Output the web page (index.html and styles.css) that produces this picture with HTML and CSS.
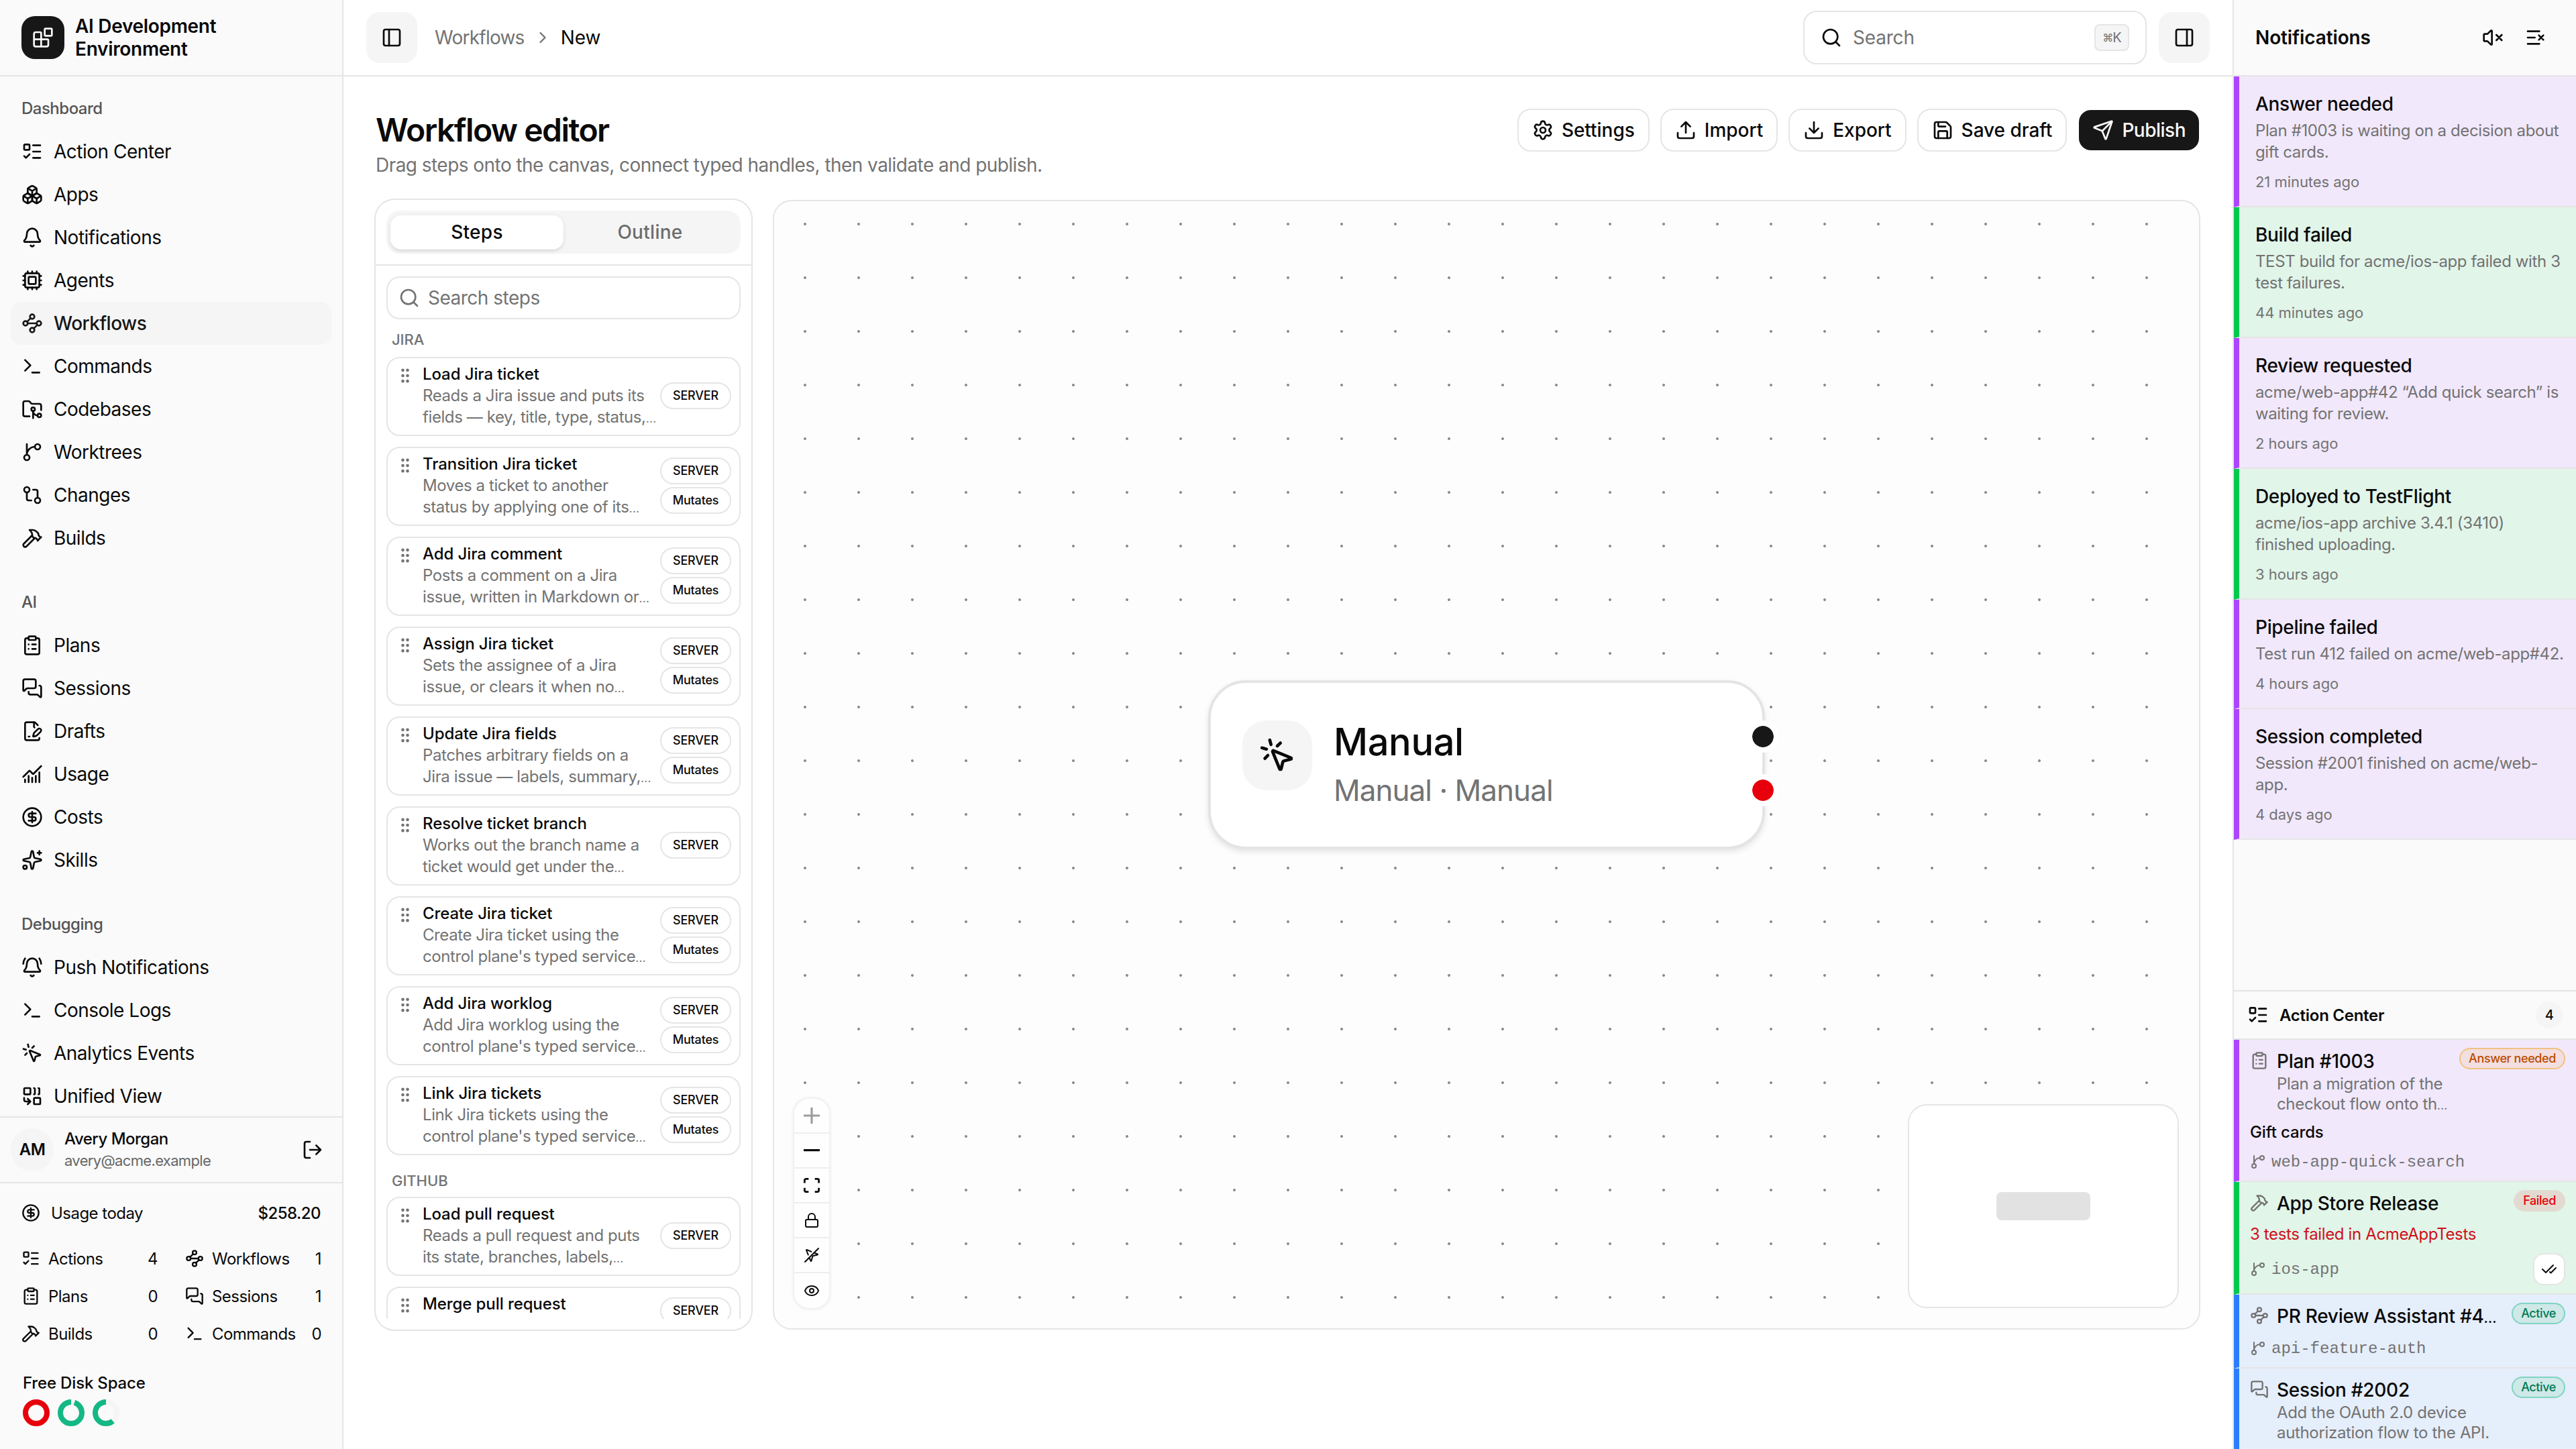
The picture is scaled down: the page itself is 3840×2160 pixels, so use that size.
FILE: index.html
```html
<!DOCTYPE html>
<html lang="en">
  <head>
    <meta charset="UTF-8" />
    <title>Workflow editor</title>
    <link rel="stylesheet" href="styles.css" />
  </head>
  <body>
    <!-- icon sprite -->
    <svg class="sprite" xmlns="http://www.w3.org/2000/svg">
      <symbol id="i-blocks" viewBox="0 0 24 24"><path d="M10 22V7a1 1 0 0 0-1-1H4a2 2 0 0 0-2 2v12a2 2 0 0 0 2 2h12a2 2 0 0 0 2-2v-5a1 1 0 0 0-1-1H2" /><rect x="14" y="2" width="8" height="8" rx="1" /></symbol>
      <symbol id="i-todo" viewBox="0 0 24 24"><path d="M13 5h8M13 12h8M13 19h8M3 17l2 2 4-4" /><rect x="3" y="4" width="6" height="6" rx="1" /></symbol>
      <symbol id="i-boxes" viewBox="0 0 24 24"><path d="M2.97 12.92A2 2 0 0 0 2 14.63v3.24a2 2 0 0 0 .97 1.71l3 1.8a2 2 0 0 0 2.06 0L12 19v-5.5l-5-3-4.03 2.42Z" /><path d="m7 16.5-4.74-2.85M7 16.5l5-3M7 16.5v5.17" /><path d="M12 13.5V19l3.97 2.38a2 2 0 0 0 2.06 0l3-1.8a2 2 0 0 0 .97-1.71v-3.24a2 2 0 0 0-.97-1.71L17 10.5l-5 3Z" /><path d="m17 16.5-5-3M17 16.5l4.74-2.85M17 16.5v5.17" /><path d="M7.97 4.42A2 2 0 0 0 7 6.13v4.37l5 3 5-3V6.13a2 2 0 0 0-.97-1.71l-3-1.8a2 2 0 0 0-2.06 0l-3 1.8Z" /><path d="M12 8 7.26 5.15M12 8l4.74-2.85M12 13.5V8" /></symbol>
      <symbol id="i-bell" viewBox="0 0 24 24"><path d="M10.268 21a2 2 0 0 0 3.464 0" /><path d="M3.262 15.326A1 1 0 0 0 4 17h16a1 1 0 0 0 .74-1.673C19.41 13.956 18 12.499 18 8A6 6 0 0 0 6 8c0 4.499-1.411 5.956-2.738 7.326" /></symbol>
      <symbol id="i-bell-ring" viewBox="0 0 24 24"><path d="M10.268 21a2 2 0 0 0 3.464 0M22 8c0-2.3-.8-4.3-2-6M4 2C2.8 3.7 2 5.7 2 8" /><path d="M3.262 15.326A1 1 0 0 0 4 17h16a1 1 0 0 0 .74-1.673C19.41 13.956 18 12.499 18 8A6 6 0 0 0 6 8c0 4.499-1.411 5.956-2.738 7.326" /></symbol>
      <symbol id="i-cpu" viewBox="0 0 24 24"><path d="M12 20v2M12 2v2M17 20v2M17 2v2M2 12h2M2 17h2M2 7h2M20 12h2M20 17h2M20 7h2M7 20v2M7 2v2" /><rect x="4" y="4" width="16" height="16" rx="2" /><rect x="8" y="8" width="8" height="8" rx="1" /></symbol>
      <symbol id="i-flow" viewBox="0 0 24 24"><circle cx="12" cy="4.5" r="2.5" /><circle cx="4.5" cy="12" r="2.5" /><circle cx="19.5" cy="12" r="2.5" /><circle cx="12" cy="19.5" r="2.5" /><path d="m10.2 6.3-3.9 3.9M7 12h10M13.8 17.7l3.9-3.9" /></symbol>
      <symbol id="i-terminal" viewBox="0 0 24 24"><path d="M12 19h8M4 17l6-6-6-6" /></symbol>
      <symbol id="i-folder-git" viewBox="0 0 24 24"><path d="M18 19a5 5 0 0 1-5-5v8" /><path d="M9 20H4a2 2 0 0 1-2-2V5a2 2 0 0 1 2-2h3.9a2 2 0 0 1 1.69.9l.81 1.2a2 2 0 0 0 1.67.9H20a2 2 0 0 1 2 2v5" /><circle cx="13" cy="12" r="2" /><circle cx="20" cy="19" r="2" /></symbol>
      <symbol id="i-branch" viewBox="0 0 24 24"><path d="M15 6a9 9 0 0 0-9 9V3" /><circle cx="18" cy="6" r="3" /><circle cx="6" cy="18" r="3" /></symbol>
      <symbol id="i-compare" viewBox="0 0 24 24"><circle cx="18" cy="18" r="3" /><circle cx="6" cy="6" r="3" /><path d="M13 6h3a2 2 0 0 1 2 2v7M11 18H8a2 2 0 0 1-2-2V9" /></symbol>
      <symbol id="i-hammer" viewBox="0 0 24 24"><path d="m15 12-9.373 9.373a1 1 0 0 1-3.001-3L12 9M18 15l4-4" /><path d="m21.5 11.5-1.914-1.914A2 2 0 0 1 19 8.172v-.344a2 2 0 0 0-.586-1.414l-1.657-1.657A6 6 0 0 0 12.516 3H9l1.243 1.243A6 6 0 0 1 12 8.485V10l2 2h1.172a2 2 0 0 1 1.414.586L18.5 14.5" /></symbol>
      <symbol id="i-clipboard" viewBox="0 0 24 24"><rect x="8" y="2" width="8" height="4" rx="1" /><path d="M16 4h2a2 2 0 0 1 2 2v14a2 2 0 0 1-2 2H6a2 2 0 0 1-2-2V6a2 2 0 0 1 2-2h2M12 11h4M12 16h4M8 11h.01M8 16h.01" /></symbol>
      <symbol id="i-messages" viewBox="0 0 24 24"><path d="M16 10a2 2 0 0 1-2 2H6.828a2 2 0 0 0-1.414.586l-2.202 2.202A.71.71 0 0 1 2 14.286V4a2 2 0 0 1 2-2h10a2 2 0 0 1 2 2z" /><path d="M20 9a2 2 0 0 1 2 2v10.286a.71.71 0 0 1-1.212.502l-2.202-2.202A2 2 0 0 0 17.172 19H10a2 2 0 0 1-2-2v-1" /></symbol>
      <symbol id="i-draft" viewBox="0 0 24 24"><path d="M14.364 13.634a2 2 0 0 0-.506.854l-.837 2.87a.5.5 0 0 0 .62.62l2.87-.837a2 2 0 0 0 .854-.506l4.013-4.009a1 1 0 0 0-3.004-3.004z" /><path d="M14.487 7.858A1 1 0 0 1 14 7V2M8 18h1" /><path d="M20 19.645V20a2 2 0 0 1-2 2H6a2 2 0 0 1-2-2V4a2 2 0 0 1 2-2h8a2.4 2.4 0 0 1 1.706.706l2.516 2.516" /></symbol>
      <symbol id="i-chart" viewBox="0 0 24 24"><path d="M12 16v5M16 14v7M20 10v11M4 18v3M8 14v7" /><path d="m22 3-8.646 8.646a.5.5 0 0 1-.708 0L9.354 8.354a.5.5 0 0 0-.707 0L2 15" /></symbol>
      <symbol id="i-dollar" viewBox="0 0 24 24"><circle cx="12" cy="12" r="10" /><path d="M16 8h-6a2 2 0 1 0 0 4h4a2 2 0 1 1 0 4H8M12 18V6" /></symbol>
      <symbol id="i-sparkles" viewBox="0 0 24 24"><path d="M11.017 2.814a1 1 0 0 1 1.966 0l1.051 5.558a2 2 0 0 0 1.594 1.594l5.558 1.051a1 1 0 0 1 0 1.966l-5.558 1.051a2 2 0 0 0-1.594 1.594l-1.051 5.558a1 1 0 0 1-1.966 0l-1.051-5.558a2 2 0 0 0-1.594-1.594l-5.558-1.051a1 1 0 0 1 0-1.966l5.558-1.051a2 2 0 0 0 1.594-1.594z" /><path d="M20 2v4M22 4h-4" /><circle cx="4" cy="20" r="2" /></symbol>
      <symbol id="i-click" viewBox="0 0 24 24"><path d="M14 4.1 12 6M5.1 8l-2.9-.8M6 12l-1.9 2M7.2 2.2 8 5.1" /><path d="M9.037 9.69a.498.498 0 0 1 .653-.653l11 4.5a.5.5 0 0 1-.074.949l-4.349 1.041a1 1 0 0 0-.74.739l-1.04 4.35a.5.5 0 0 1-.95.074z" /></symbol>
      <symbol id="i-combine" viewBox="0 0 24 24"><path d="M14 3a1 1 0 0 1 1 1v5a1 1 0 0 1-1 1M19 3a1 1 0 0 1 1 1v5a1 1 0 0 1-1 1M7 15l3 3M7 21l3-3H5a2 2 0 0 1-2-2v-2" /><rect x="14" y="14" width="7" height="7" rx="1" /><rect x="3" y="3" width="7" height="7" rx="1" /></symbol>
      <symbol id="i-logout" viewBox="0 0 24 24"><path d="m16 17 5-5-5-5M21 12H9M9 21H5a2 2 0 0 1-2-2V5a2 2 0 0 1 2-2h4" /></symbol>
      <symbol id="i-panel-left" viewBox="0 0 24 24"><rect x="3" y="3" width="18" height="18" rx="2" /><path d="M9 3v18" /></symbol>
      <symbol id="i-panel-right" viewBox="0 0 24 24"><rect x="3" y="3" width="18" height="18" rx="2" /><path d="M15 3v18" /></symbol>
      <symbol id="i-chevron" viewBox="0 0 24 24"><path d="m9 18 6-6-6-6" /></symbol>
      <symbol id="i-search" viewBox="0 0 24 24"><path d="m21 21-4.34-4.34" /><circle cx="11" cy="11" r="8" /></symbol>
      <symbol id="i-settings" viewBox="0 0 24 24"><path d="M9.671 4.136a2.34 2.34 0 0 1 4.659 0 2.34 2.34 0 0 0 3.319 1.915 2.34 2.34 0 0 1 2.33 4.033 2.34 2.34 0 0 0 0 3.831 2.34 2.34 0 0 1-2.33 4.033 2.34 2.34 0 0 0-3.319 1.915 2.34 2.34 0 0 1-4.659 0 2.34 2.34 0 0 0-3.32-1.915 2.34 2.34 0 0 1-2.33-4.033 2.34 2.34 0 0 0 0-3.831A2.34 2.34 0 0 1 6.35 6.051a2.34 2.34 0 0 0 3.319-1.915" /><circle cx="12" cy="12" r="3" /></symbol>
      <symbol id="i-upload" viewBox="0 0 24 24"><path d="M12 3v12M17 8l-5-5-5 5M21 15v4a2 2 0 0 1-2 2H5a2 2 0 0 1-2-2v-4" /></symbol>
      <symbol id="i-download" viewBox="0 0 24 24"><path d="M12 15V3M7 10l5 5 5-5M21 15v4a2 2 0 0 1-2 2H5a2 2 0 0 1-2-2v-4" /></symbol>
      <symbol id="i-save" viewBox="0 0 24 24"><path d="M15.2 3a2 2 0 0 1 1.4.6l3.8 3.8a2 2 0 0 1 .6 1.4V19a2 2 0 0 1-2 2H5a2 2 0 0 1-2-2V5a2 2 0 0 1 2-2z" /><path d="M17 21v-7a1 1 0 0 0-1-1H8a1 1 0 0 0-1 1v7M7 3v4a1 1 0 0 0 1 1h7" /></symbol>
      <symbol id="i-send" viewBox="0 0 24 24"><path d="M14.536 21.686a.5.5 0 0 0 .937-.024l6.5-19a.496.496 0 0 0-.635-.635l-19 6.5a.5.5 0 0 0-.024.937l7.93 3.18a2 2 0 0 1 1.112 1.11z" /><path d="m21.854 2.147-10.94 10.939" /></symbol>
      <symbol id="i-grip" viewBox="0 0 24 24"><circle cx="9" cy="5" r="1" /><circle cx="9" cy="12" r="1" /><circle cx="9" cy="19" r="1" /><circle cx="15" cy="5" r="1" /><circle cx="15" cy="12" r="1" /><circle cx="15" cy="19" r="1" /></symbol>
      <symbol id="i-lock" viewBox="0 0 24 24"><rect x="3" y="11" width="18" height="11" rx="2" /><path d="M7 11V7a5 5 0 0 1 10 0v4" /></symbol>
      <symbol id="i-pointer-off" viewBox="0 0 24 24"><path d="m15.55 8.45 5.138 2.087a.5.5 0 0 1-.063.947l-6.124 1.58a2 2 0 0 0-1.438 1.435l-1.579 6.126a.5.5 0 0 1-.947.063L8.45 15.551M22 2 2 22M6.816 11.528l-2.779-6.84a.495.495 0 0 1 .651-.651l6.84 2.779" /></symbol>
      <symbol id="i-eye" viewBox="0 0 24 24"><path d="M2.062 12.348a1 1 0 0 1 0-.696 10.75 10.75 0 0 1 19.876 0 1 1 0 0 1 0 .696 10.75 10.75 0 0 1-19.876 0" /><circle cx="12" cy="12" r="3" /></symbol>
      <symbol id="i-mute" viewBox="0 0 24 24"><path d="M11 4.702a.705.705 0 0 0-1.203-.498L6.413 7.587A1.4 1.4 0 0 1 5.416 8H3a1 1 0 0 0-1 1v6a1 1 0 0 0 1 1h2.416a1.4 1.4 0 0 1 .997.413l3.383 3.384A.705.705 0 0 0 11 19.298zM22 9l-6 6M16 9l6 6" /></symbol>
      <symbol id="i-list-x" viewBox="0 0 24 24"><path d="M16 5H3M11 12H3M16 19H3M15.5 9.5l5 5M20.5 9.5l-5 5" /></symbol>
      <symbol id="i-checks" viewBox="0 0 24 24"><path d="M18 6 7 17l-5-5M22 10l-7.5 7.5L13 16" /></symbol>
    </svg>

    <div class="app">
      <!-- left sidebar -->
      <aside class="sidebar">
        <div class="brand">
          <div class="brand-logo"><svg class="icon"><use href="#i-blocks" /></svg></div>
          <div class="brand-name">AI Development<br />Environment</div>
        </div>

        <nav class="nav">
          <div class="nav-group">
            <h6>Dashboard</h6>
            <a class="nav-item"><svg class="icon"><use href="#i-todo" /></svg>Action Center</a>
            <a class="nav-item"><svg class="icon"><use href="#i-boxes" /></svg>Apps</a>
            <a class="nav-item"><svg class="icon"><use href="#i-bell" /></svg>Notifications</a>
            <a class="nav-item"><svg class="icon"><use href="#i-cpu" /></svg>Agents</a>
            <a class="nav-item active"><svg class="icon"><use href="#i-flow" /></svg>Workflows</a>
            <a class="nav-item"><svg class="icon"><use href="#i-terminal" /></svg>Commands</a>
            <a class="nav-item"><svg class="icon"><use href="#i-folder-git" /></svg>Codebases</a>
            <a class="nav-item"><svg class="icon"><use href="#i-branch" /></svg>Worktrees</a>
            <a class="nav-item"><svg class="icon"><use href="#i-compare" /></svg>Changes</a>
            <a class="nav-item"><svg class="icon"><use href="#i-hammer" /></svg>Builds</a>
          </div>
          <div class="nav-group">
            <h6>AI</h6>
            <a class="nav-item"><svg class="icon"><use href="#i-clipboard" /></svg>Plans</a>
            <a class="nav-item"><svg class="icon"><use href="#i-messages" /></svg>Sessions</a>
            <a class="nav-item"><svg class="icon"><use href="#i-draft" /></svg>Drafts</a>
            <a class="nav-item"><svg class="icon"><use href="#i-chart" /></svg>Usage</a>
            <a class="nav-item"><svg class="icon"><use href="#i-dollar" /></svg>Costs</a>
            <a class="nav-item"><svg class="icon"><use href="#i-sparkles" /></svg>Skills</a>
          </div>
          <div class="nav-group">
            <h6>Debugging</h6>
            <a class="nav-item"><svg class="icon"><use href="#i-bell-ring" /></svg>Push Notifications</a>
            <a class="nav-item"><svg class="icon"><use href="#i-terminal" /></svg>Console Logs</a>
            <a class="nav-item"><svg class="icon"><use href="#i-click" /></svg>Analytics Events</a>
            <a class="nav-item"><svg class="icon"><use href="#i-combine" /></svg>Unified View</a>
          </div>
        </nav>

        <div class="user">
          <div class="avatar">AM</div>
          <div class="user-info">
            <div class="user-name">Avery Morgan</div>
            <div class="user-mail">avery@acme.example</div>
          </div>
          <svg class="icon"><use href="#i-logout" /></svg>
        </div>

        <div class="stats">
          <div class="usage-row">
            <svg class="icon icon-28"><use href="#i-dollar" /></svg>
            <span>Usage today</span>
            <b>$258.20</b>
          </div>
          <div class="counts">
            <div class="count"><svg class="icon icon-28"><use href="#i-todo" /></svg><span>Actions</span><em>4</em></div>
            <div class="count"><svg class="icon icon-28"><use href="#i-flow" /></svg><span>Workflows</span><em>1</em></div>
            <div class="count"><svg class="icon icon-28"><use href="#i-clipboard" /></svg><span>Plans</span><em>0</em></div>
            <div class="count"><svg class="icon icon-28"><use href="#i-messages" /></svg><span>Sessions</span><em>1</em></div>
            <div class="count"><svg class="icon icon-28"><use href="#i-hammer" /></svg><span>Builds</span><em>0</em></div>
            <div class="count"><svg class="icon icon-28"><use href="#i-terminal" /></svg><span>Commands</span><em>0</em></div>
          </div>
          <div class="disk-title">Free Disk Space</div>
          <div class="disks">
            <svg class="disk" viewBox="0 0 40 40"><circle class="disk-full" cx="20" cy="20" r="16" /></svg>
            <svg class="disk" viewBox="0 0 40 40"><circle class="disk-track" cx="20" cy="20" r="16" /><circle class="disk-ok" cx="20" cy="20" r="16" pathLength="100" stroke-dasharray="95 5" stroke-dashoffset="-5" /></svg>
            <svg class="disk" viewBox="0 0 40 40"><circle class="disk-track" cx="20" cy="20" r="16" /><circle class="disk-ok" cx="20" cy="20" r="16" pathLength="100" stroke-dasharray="61 39" stroke-dashoffset="-39" /></svg>
          </div>
        </div>
      </aside>

      <!-- main column -->
      <div class="main">
        <header class="topbar">
          <button class="toggle"><svg class="icon"><use href="#i-panel-left" /></svg></button>
          <div class="crumbs">
            <span>Workflows</span>
            <svg class="icon icon-28"><use href="#i-chevron" /></svg>
            <span class="current">New</span>
          </div>
          <div class="search">
            <svg class="icon"><use href="#i-search" /></svg>
            <span>Search</span>
            <kbd><i>⌘</i>K</kbd>
          </div>
          <button class="toggle"><svg class="icon"><use href="#i-panel-right" /></svg></button>
        </header>

        <main class="content">
          <div class="page-head">
            <div>
              <h1>Workflow editor</h1>
              <p>Drag steps onto the canvas, connect typed handles, then validate and publish.</p>
            </div>
            <div class="actions">
              <button class="btn"><svg class="icon"><use href="#i-settings" /></svg>Settings</button>
              <button class="btn"><svg class="icon"><use href="#i-upload" /></svg>Import</button>
              <button class="btn"><svg class="icon"><use href="#i-download" /></svg>Export</button>
              <button class="btn"><svg class="icon"><use href="#i-save" /></svg>Save draft</button>
              <button class="btn primary"><svg class="icon"><use href="#i-send" /></svg>Publish</button>
            </div>
          </div>

          <div class="editor">
            <section class="steps">
              <div class="tabs-wrap">
                <div class="tabs">
                  <div class="tab on">Steps</div>
                  <div class="tab">Outline</div>
                </div>
              </div>
              <div class="steps-body">
                <div class="steps-list">
                  <div class="steps-search"><svg class="icon"><use href="#i-search" /></svg>Search steps</div>

                  <h5>JIRA</h5>
                  <div class="step">
                    <svg class="icon icon-28"><use href="#i-grip" /></svg>
                    <div class="step-text"><b>Load Jira ticket</b><p>Reads a Jira issue and puts its<br />fields — key, title, type, status,<i>…</i></p></div>
                    <div class="badges"><span>SERVER</span></div>
                  </div>
                  <div class="step">
                    <svg class="icon icon-28"><use href="#i-grip" /></svg>
                    <div class="step-text"><b>Transition Jira ticket</b><p>Moves a ticket to another<br />status by applying one of its<i>…</i></p></div>
                    <div class="badges"><span>SERVER</span><span>Mutates</span></div>
                  </div>
                  <div class="step">
                    <svg class="icon icon-28"><use href="#i-grip" /></svg>
                    <div class="step-text"><b>Add Jira comment</b><p>Posts a comment on a Jira<br />issue, written in Markdown or<i>…</i></p></div>
                    <div class="badges"><span>SERVER</span><span>Mutates</span></div>
                  </div>
                  <div class="step">
                    <svg class="icon icon-28"><use href="#i-grip" /></svg>
                    <div class="step-text"><b>Assign Jira ticket</b><p>Sets the assignee of a Jira<br />issue, or clears it when no<i>…</i></p></div>
                    <div class="badges"><span>SERVER</span><span>Mutates</span></div>
                  </div>
                  <div class="step">
                    <svg class="icon icon-28"><use href="#i-grip" /></svg>
                    <div class="step-text"><b>Update Jira fields</b><p>Patches arbitrary fields on a<br />Jira issue — labels, summary,<i>…</i></p></div>
                    <div class="badges"><span>SERVER</span><span>Mutates</span></div>
                  </div>
                  <div class="step">
                    <svg class="icon icon-28"><use href="#i-grip" /></svg>
                    <div class="step-text"><b>Resolve ticket branch</b><p>Works out the branch name a<br />ticket would get under the<i>…</i></p></div>
                    <div class="badges"><span>SERVER</span></div>
                  </div>
                  <div class="step">
                    <svg class="icon icon-28"><use href="#i-grip" /></svg>
                    <div class="step-text"><b>Create Jira ticket</b><p>Create Jira ticket using the<br />control plane's typed service<i>…</i></p></div>
                    <div class="badges"><span>SERVER</span><span>Mutates</span></div>
                  </div>
                  <div class="step">
                    <svg class="icon icon-28"><use href="#i-grip" /></svg>
                    <div class="step-text"><b>Add Jira worklog</b><p>Add Jira worklog using the<br />control plane's typed service<i>…</i></p></div>
                    <div class="badges"><span>SERVER</span><span>Mutates</span></div>
                  </div>
                  <div class="step">
                    <svg class="icon icon-28"><use href="#i-grip" /></svg>
                    <div class="step-text"><b>Link Jira tickets</b><p>Link Jira tickets using the<br />control plane's typed service<i>…</i></p></div>
                    <div class="badges"><span>SERVER</span><span>Mutates</span></div>
                  </div>

                  <h5 class="next">GITHUB</h5>
                  <div class="step">
                    <svg class="icon icon-28"><use href="#i-grip" /></svg>
                    <div class="step-text"><b>Load pull request</b><p>Reads a pull request and puts<br />its state, branches, labels,<i>…</i></p></div>
                    <div class="badges"><span>SERVER</span></div>
                  </div>
                  <div class="step">
                    <svg class="icon icon-28"><use href="#i-grip" /></svg>
                    <div class="step-text"><b>Merge pull request</b></div>
                    <div class="badges top"><span>SERVER</span></div>
                  </div>
                </div>
              </div>
            </section>

            <section class="canvas">
              <div class="node">
                <div class="node-icon"><svg class="icon"><use href="#i-click" /></svg></div>
                <div class="node-text">
                  <h2>Manual</h2>
                  <p>Manual · Manual</p>
                </div>
                <span class="handle handle-out"></span>
                <span class="handle handle-error"></span>
              </div>

              <div class="controls">
                <div class="control disabled"><svg class="solid" viewBox="0 0 32 32"><path d="M32 18.133H18.133V32h-4.266V18.133H0v-4.266h13.867V0h4.266v13.867H32z" /></svg></div>
                <div class="control"><svg class="solid" viewBox="0 0 32 5"><path d="M0 0h32v4.2H0z" /></svg></div>
                <div class="control"><svg class="solid" viewBox="0 0 32 30"><path d="M3.692 4.63c0-.53.4-.938.939-.938h5.215V0H4.708C2.13 0 0 2.054 0 4.63v5.216h3.692V4.631zM27.354 0h-5.2v3.692h5.17c.53 0 .984.4.984.939v5.215H32V4.631A4.624 4.624 0 0027.354 0zm.954 24.83c0 .532-.4.94-.939.94h-5.215v3.768h5.215c2.577 0 4.631-2.13 4.631-4.707v-5.139h-3.692v5.139zm-23.677.94c-.531 0-.939-.4-.939-.94v-5.138H0v5.139c0 2.577 2.13 4.707 4.708 4.707h5.138V25.77H4.631z" /></svg></div>
                <div class="control"><svg class="icon icon-24"><use href="#i-lock" /></svg></div>
                <div class="control"><svg class="icon icon-24"><use href="#i-pointer-off" /></svg></div>
                <div class="control"><svg class="icon icon-24"><use href="#i-eye" /></svg></div>
              </div>

              <div class="minimap"><div class="minimap-node"></div></div>
            </section>
          </div>
        </main>
      </div>

      <!-- right panel -->
      <aside class="panel">
        <div class="panel-head">
          <h3>Notifications</h3>
          <svg class="icon"><use href="#i-mute" /></svg>
          <svg class="icon"><use href="#i-list-x" /></svg>
        </div>
        <div class="notes">
          <article class="note purple">
            <h4>Answer needed</h4>
            <p>Plan #1003 is waiting on a decision about<br />gift cards.</p>
            <time>21 minutes ago</time>
          </article>
          <article class="note green">
            <h4>Build failed</h4>
            <p>TEST build for acme/ios-app failed with 3<br />test failures.</p>
            <time>44 minutes ago</time>
          </article>
          <article class="note purple">
            <h4>Review requested</h4>
            <p>acme/web-app#42 “Add quick search” is<br />waiting for review.</p>
            <time>2 hours ago</time>
          </article>
          <article class="note green">
            <h4>Deployed to TestFlight</h4>
            <p>acme/ios-app archive 3.4.1 (3410)<br />finished uploading.</p>
            <time>3 hours ago</time>
          </article>
          <article class="note purple">
            <h4>Pipeline failed</h4>
            <p>Test run 412 failed on acme/web-app#42.</p>
            <time>4 hours ago</time>
          </article>
          <article class="note purple">
            <h4>Session completed</h4>
            <p>Session #2001 finished on acme/web-<br />app.</p>
            <time>4 days ago</time>
          </article>
        </div>

        <div class="ac-head">
          <svg class="icon"><use href="#i-todo" /></svg>
          <h3>Action Center</h3>
          <span class="ac-count">4</span>
        </div>
        <div class="ac-list">
          <article class="task purple">
            <div class="task-top">
              <svg class="icon icon-28"><use href="#i-clipboard" /></svg>
              <h4>Plan #1003</h4>
              <span class="pill amber">Answer needed</span>
            </div>
            <p class="task-desc">Plan a migration of the<br />checkout flow onto th<i>…</i></p>
            <div class="task-sub">Gift cards</div>
            <div class="task-meta"><svg class="icon icon-24"><use href="#i-branch" /></svg>web-app-quick-search</div>
          </article>
          <article class="task green">
            <div class="task-top">
              <svg class="icon icon-28"><use href="#i-hammer" /></svg>
              <h4>App Store Release</h4>
              <span class="pill red">Failed</span>
            </div>
            <div class="task-error">3 tests failed in AcmeAppTests</div>
            <div class="task-meta tall"><svg class="icon icon-24"><use href="#i-branch" /></svg>ios-app<button class="ack"><svg class="icon icon-24"><use href="#i-checks" /></svg></button></div>
          </article>
          <article class="task blue">
            <div class="task-top">
              <svg class="icon icon-28"><use href="#i-flow" /></svg>
              <h4>PR Review Assistant #4<i>…</i></h4>
              <span class="pill teal">Active</span>
            </div>
            <div class="task-meta"><svg class="icon icon-24"><use href="#i-branch" /></svg>api-feature-auth</div>
          </article>
          <article class="task blue">
            <div class="task-top">
              <svg class="icon icon-28"><use href="#i-messages" /></svg>
              <h4>Session #2002</h4>
              <span class="pill teal">Active</span>
            </div>
            <p class="task-desc">Add the OAuth 2.0 device<br />authorization flow to the API.</p>
          </article>
        </div>
      </aside>
    </div>
  </body>
</html>
```
FILE: styles.css
```css
* {
  box-sizing: border-box;
}

body {
  margin: 0;
  background: #fff;
  color: #0a0a0a;
  font-family: Inter, "Liberation Sans", sans-serif;
  font-size: 28px;
  letter-spacing: -0.018em;
  white-space: nowrap;
}

h1, h2, h3, h4, h5, h6, p {
  margin: 0;
}

button {
  font: inherit;
  letter-spacing: inherit;
  color: inherit;
  border: 0;
  padding: 0;
}

.sprite {
  display: none;
}

.icon {
  width: 32px;
  height: 32px;
  flex: none;
  fill: none;
  stroke: currentColor;
  stroke-width: 2;
  stroke-linecap: round;
  stroke-linejoin: round;
}

.icon-28 {
  width: 28px;
  height: 28px;
}

.icon-24 {
  width: 24px;
  height: 24px;
}

.app {
  display: grid;
  grid-template-columns: 512px 1fr 512px;
  height: 2160px;
  overflow: hidden;
}

/* sidebar */
.sidebar {
  display: flex;
  flex-direction: column;
  height: 2160px;
  background: #fafafa;
  border-right: 2px solid #e5e5e5;
}

.brand {
  display: flex;
  align-items: center;
  gap: 16px;
  flex: none;
  height: 114px;
  padding: 0 32px;
  border-bottom: 2px solid #e5e5e5;
}

.brand-logo {
  display: grid;
  place-items: center;
  width: 64px;
  height: 64px;
  border-radius: 20px;
  background: #171717;
  color: #fafafa;
}

.brand-name {
  font-weight: 600;
  line-height: 34px;
  letter-spacing: -0.011em;
}

.nav {
  flex: 1;
  min-height: 0;
  overflow: hidden;
  padding: 16px 16px 0;
}

.nav-group {
  margin-bottom: 32px;
}

.nav-group h6 {
  padding-left: 16px;
  font-size: 24px;
  font-weight: 500;
  line-height: 64px;
  color: #555;
}

.nav-item {
  display: flex;
  align-items: center;
  gap: 16px;
  height: 64px;
  padding: 0 16px;
  border-radius: 16px;
  line-height: 36px;
}

.nav-item.active {
  background: #f5f5f5;
  color: #171717;
  font-weight: 500;
}

.user {
  display: flex;
  align-items: center;
  flex: none;
  gap: 16px;
  height: 98px;
  padding: 0 28px 0 16px;
  border-top: 2px solid #e5e5e5;
}

.avatar {
  width: 64px;
  height: 64px;
  border-radius: 50%;
  background: #f5f5f5;
  font-size: 24px;
  font-weight: 600;
  line-height: 64px;
  text-align: center;
}

.user-info {
  flex: 1;
}

.user-name {
  font-size: 24px;
  font-weight: 500;
  line-height: 32px;
  letter-spacing: -0.021em;
}

.user-mail {
  font-size: 22px;
  line-height: 32px;
  letter-spacing: -0.03em;
  color: #676767;
}

.stats {
  flex: none;
  height: 398px;
  padding: 24px 32px 0;
  border-top: 2px solid #e5e5e5;
  font-size: 24px;
  letter-spacing: -0.022em;
}

.usage-row {
  display: flex;
  align-items: center;
  gap: 16px;
  height: 40px;
}

.usage-row b {
  margin-left: auto;
  font-weight: 500;
}

.counts {
  display: grid;
  grid-template-columns: 203px 203px;
  gap: 16px 41px;
  margin-top: 28px;
}

.count {
  display: flex;
  align-items: center;
  gap: 12px;
  height: 40px;
}

.count em {
  margin-left: auto;
  font-style: normal;
}

.disk-title {
  margin: 38px 0 8px;
  padding-left: 2px;
  font-weight: 500;
  line-height: 32px;
  letter-spacing: -0.007em;
}

.disks {
  display: flex;
  gap: 12px;
  padding-left: 2px;
}

.disk {
  width: 40px;
  height: 40px;
  fill: none;
  stroke-width: 8;
  transform: rotate(-90deg);
}

.disk-full {
  stroke: #e7000b;
}

.disk-track {
  stroke: #f5f5f5;
}

.disk-ok {
  stroke: #14b885;
}

/* top bar */
.main {
  min-width: 0;
}

.topbar {
  display: flex;
  align-items: center;
  height: 114px;
  padding: 0 34px;
  border-bottom: 2px solid #e5e5e5;
}

.toggle {
  display: grid;
  place-items: center;
  width: 76px;
  height: 76px;
  border-radius: 20px;
  background: #f5f5f5;
}

.crumbs {
  display: flex;
  align-items: center;
  gap: 13px;
  margin-left: 26px;
  color: #737373;
  letter-spacing: -0.027em;
}

.crumbs .current {
  color: #0a0a0a;
  letter-spacing: 0;
}

.search {
  display: flex;
  align-items: center;
  gap: 16px;
  width: 512px;
  height: 80px;
  margin: 0 18px 0 auto;
  padding: 0 24px;
  border: 2px solid #e5e5e5;
  border-radius: 20px;
}

.search span {
  color: #737373;
  letter-spacing: -0.007em;
}

.search kbd {
  display: flex;
  align-items: center;
  justify-content: center;
  width: 52px;
  height: 40px;
  margin-left: auto;
  border: 2px solid #e5e5e5;
  border-radius: 8px;
  background: #f5f5f5;
  color: #737373;
  font: 20px Inter, sans-serif;
  letter-spacing: -0.05em;
}

.search kbd i {
  font-size: 16px;
  font-style: normal;
}

/* page */
.content {
  padding: 48px;
}

.page-head {
  display: flex;
  justify-content: space-between;
  height: 104px;
  margin-bottom: 32px;
}

.page-head h1 {
  font-size: 48px;
  font-weight: 600;
  line-height: 63px;
  letter-spacing: -0.032em;
}

.page-head p {
  margin-top: 1px;
  line-height: 40px;
  letter-spacing: -0.0195em;
  color: #737373;
}

.actions {
  display: flex;
  gap: 16px;
}

.btn {
  display: flex;
  align-items: center;
  gap: 12px;
  height: 64px;
  padding: 0 20px;
  border: 2px solid #e5e5e5;
  border-radius: 20px;
  background: #fff;
  font-weight: 500;
  line-height: 36px;
  letter-spacing: -0.001em;
}

.btn.primary {
  border-color: transparent;
  background: #171717 padding-box;
  color: #fafafa;
  letter-spacing: -0.018em;
}

.editor {
  display: grid;
  grid-template-columns: 560px 1fr;
  gap: 32px;
  height: 1684px;
}

/* steps panel */
.steps {
  display: flex;
  flex-direction: column;
  min-height: 0;
  border-radius: 28px;
  box-shadow: 0 0 0 2px #e5e5e5;
}

.tabs-wrap {
  padding: 16px;
  border-bottom: 2px solid #e5e5e5;
}

.tabs {
  display: grid;
  grid-template-columns: 1fr 1fr;
  height: 64px;
  padding: 7px 6px;
  border-radius: 20px;
  background: #f5f5f5;
}

.tab {
  border-radius: 16px;
  color: #6c6c6c;
  font-weight: 500;
  line-height: 51px;
  letter-spacing: 0.01em;
  text-align: center;
}

.tab.on {
  background: #fff;
  color: #0a0a0a;
  box-shadow: 0 2px 6px rgba(0, 0, 0, 0.1), 0 2px 4px -2px rgba(0, 0, 0, 0.1);
}

.steps-body {
  flex: 1;
  min-height: 0;
  padding: 16px;
}

.steps-list {
  height: 100%;
  overflow: hidden;
}

.steps-search {
  display: flex;
  align-items: center;
  gap: 12px;
  height: 64px;
  padding-left: 16px;
  border: 2px solid #e5e5e5;
  border-radius: 20px;
  color: #737373;
  line-height: 36px;
}

.steps h5 {
  margin: 14px 0 10px;
  padding-left: 8px;
  color: #737373;
  font-size: 22px;
  font-weight: 500;
  line-height: 32px;
  letter-spacing: -0.003em;
}

.steps h5.next {
  margin: 22px 0 8px;
}

.step {
  display: flex;
  height: 118px;
  margin-bottom: 16px;
  padding: 8px 12px 10px;
  border: 2px solid #e5e5e5;
  border-radius: 20px;
}

.step:has(+ .next) {
  margin-bottom: 0;
}

.step > .icon {
  margin: 4px 12px 0 0;
  color: #737373;
}

.step-text {
  flex: 1;
  font-size: 24px;
  line-height: 32px;
}

.step-text b {
  display: block;
  font-weight: 500;
  letter-spacing: -0.004em;
}

.step-text p {
  color: #737373;
  letter-spacing: -0.017em;
}

/* tighter ellipsis at the end of clamped text */
.step-text i,
.task i {
  font-size: 0.75em;
  font-style: normal;
  line-height: 1;
}

.badges {
  display: flex;
  flex-direction: column;
  justify-content: center;
  gap: 4px;
}

.badges.top {
  justify-content: flex-start;
  padding-top: 6px;
}

.badges span {
  width: 106px;
  height: 40px;
  border: 2px solid #e5e5e5;
  border-radius: 20px;
  font-size: 18px;
  font-weight: 500;
  line-height: 36px;
  letter-spacing: -0.01em;
  text-align: center;
}

/* canvas */
.canvas {
  position: relative;
  border: 2px solid #e5e5e5;
  border-radius: 28px;
  background: #fdfdfd radial-gradient(circle, #8f8f8f 1.6px, transparent 2.3px) 6px -6px / 80px 80px;
}

.node {
  position: absolute;
  left: 647px;
  top: 714px;
  display: flex;
  gap: 32px;
  width: 830px;
  height: 252px;
  padding: 52px 47px;
  border: 4px solid #e4e4e4;
  border-radius: 56px;
  background: #fff;
  box-shadow: 0 4px 8px rgba(0, 0, 0, 0.1);
}

.node-icon {
  display: grid;
  place-items: center;
  width: 104px;
  height: 104px;
  margin-top: 4px;
  border-radius: 36px;
  background: #f5f5f5;
}

.node-icon .icon {
  width: 56px;
  height: 56px;
}

.node-text h2 {
  font-size: 56px;
  font-weight: 500;
  line-height: 72px;
  letter-spacing: -0.007em;
}

.node-text p {
  margin-top: 8px;
  color: #737373;
  font-size: 44px;
  line-height: 56px;
  letter-spacing: -0.022em;
}

.handle {
  position: absolute;
  left: 799px;
  width: 48px;
  height: 48px;
  border: 8px solid #fff;
  border-radius: 50%;
}

.handle-out {
  top: 56px;
  background: #171717 padding-box;
}

.handle-error {
  top: 136px;
  background: #e7000b padding-box;
}

.controls {
  position: absolute;
  left: 30px;
  bottom: 30px;
  width: 52px;
  border-radius: 22px;
  background: #fefefe;
  box-shadow: 0 0 4px 2px rgba(0, 0, 0, 0.07);
}

.control {
  display: grid;
  place-items: center;
  height: 52px;
  border-bottom: 2px solid #eee;
}

.control:last-child {
  border-bottom: 0;
}

.control.disabled {
  color: #9d9d9d;
}

.solid {
  width: 24px;
  max-height: 24px;
  fill: currentColor;
}

.minimap {
  position: absolute;
  right: 30px;
  bottom: 30px;
  display: grid;
  place-items: center;
  width: 404px;
  height: 304px;
  border: 2px solid #e5e5e5;
  border-radius: 28px;
  background: #fff;
}

.minimap-node {
  width: 140px;
  height: 42px;
  border-radius: 8px;
  background: #e2e2e2;
}

/* right panel */
.panel {
  display: flex;
  flex-direction: column;
  height: 2160px;
  overflow: hidden;
  border-left: 2px solid #e5e5e5;
  background: #fafafa;
}

.panel-head {
  display: flex;
  align-items: center;
  flex: none;
  gap: 32px;
  height: 114px;
  padding: 0 44px 0 32px;
  border-bottom: 2px solid #e5e5e5;
}

.panel-head h3 {
  flex: 1;
  font-size: 28px;
  font-weight: 600;
  line-height: 36px;
  letter-spacing: -0.004em;
}

.notes {
  flex: 1;
  min-height: 0;
}

.note,
.task {
  border-bottom: 2px solid #e5e5e5;
  border-left: 8px solid;
}

.purple {
  border-left-color: #ad46ff;
  background: #f1e8fb;
}

.green {
  border-left-color: #00c950;
  background: #e1f5e9;
}

.blue {
  border-left-color: #2b7fff;
  background: #e5eefb;
}

.note {
  padding: 21px 24px 20px;
}

.note h4 {
  margin-bottom: 4px;
  font-size: 28px;
  font-weight: 500;
  line-height: 40px;
  letter-spacing: -0.012em;
}

.note p {
  color: #737373;
  font-size: 24px;
  line-height: 32px;
  letter-spacing: -0.016em;
}

.note time {
  display: block;
  margin-top: 12px;
  color: #737373;
  font-size: 22px;
  line-height: 32px;
  letter-spacing: -0.002em;
}

.ac-head {
  display: flex;
  align-items: center;
  flex: none;
  gap: 16px;
  height: 74px;
  padding: 0 20px;
  border-top: 2px solid #e5e5e5;
  border-bottom: 2px solid #e5e5e5;
}

.ac-head h3 {
  flex: 1;
  font-size: 24px;
  font-weight: 600;
  letter-spacing: -0.011em;
}

.ac-count {
  width: 40px;
  height: 40px;
  border-radius: 50%;
  background: #f5f5f5;
  font-size: 20px;
  font-weight: 500;
  line-height: 40px;
  text-align: center;
}

.ac-list {
  flex: none;
  height: 610px;
}

.task {
  padding: 12px 16px;
  font-size: 24px;
}

.task-top {
  display: flex;
  gap: 12px;
  height: 38px;
}

.task-top .icon {
  margin-top: 5px;
  color: #737373;
}

.task-top h4 {
  flex: 1;
  font-size: 28px;
  font-weight: 500;
  line-height: 40px;
  letter-spacing: -0.01em;
}

.pill {
  height: 32px;
  padding: 0 12px;
  border: 2px solid transparent;
  border-radius: 16px;
  font-size: 18px;
  font-weight: 500;
  line-height: 28px;
  letter-spacing: -0.022em;
}

.pill.amber {
  border-color: #f1c283;
  background: #f3dee0;
  color: #bb4d00;
}

.pill.red {
  background: #e2dad0;
  color: #e7000b;
}

.pill.teal {
  border-color: #80d4c2;
  background: #cee9e7;
  color: #007a55;
}

.task-desc {
  padding: 1px 0 0 40px;
  color: #737373;
  line-height: 30px;
  letter-spacing: -0.014em;
}

.task-sub {
  margin-top: 11px;
  font-weight: 500;
  line-height: 32px;
  letter-spacing: -0.006em;
}

.task-error {
  margin-top: 12px;
  color: #d0101a;
  line-height: 32px;
  letter-spacing: -0.015em;
}

.task-meta {
  display: flex;
  align-items: center;
  gap: 8px;
  height: 34px;
  margin-top: 12px;
  padding-top: 2px;
  color: #737373;
  font-family: "Liberation Mono", monospace;
  letter-spacing: 0;
}

.task-sub + .task-meta {
  margin-top: 10px;
}

.task-meta.tall {
  height: 48px;
  padding-top: 0;
}

.ack {
  display: grid;
  place-items: center;
  width: 48px;
  height: 48px;
  margin-left: auto;
  border: 2px solid #e5e5e5;
  border-radius: 16px;
  background: #fff;
  color: #0a0a0a;
}
```
